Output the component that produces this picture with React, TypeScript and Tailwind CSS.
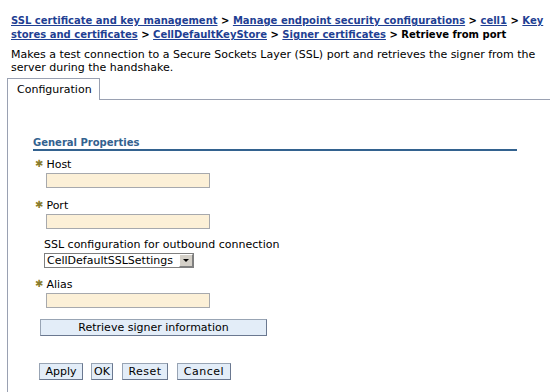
import React from 'react';

const linkCls = "text-[#1f3f93] underline";
const btnCls = "h-[17px] bg-[#e3edf8] border border-[#98a4b4] border-r-[#6a7890] border-b-[#6a7890] leading-[15px] text-[11px]";

function Req() {
    return <span className="text-[#8a7d2c] text-[10px] mr-[3px] relative top-[-1px]">✱</span>;
}

function Field({ label, required }: { label: string; required?: boolean }) {
    return (
        <div className="flex flex-col">
            <div className="h-[14px] leading-[14px] flex items-center">
                {required && <Req />}
                <span>{label}</span>
            </div>
            <div className="ml-[11px] mt-[1px] w-[164px] h-[15px] bg-[#fcf0d7] border border-[#a7a9ad]" />
        </div>
    );
}

export default function App() {
    return (
        <div className="w-[553px] h-[392px] bg-white overflow-hidden text-black text-[11px] font-['DejaVu_Sans',Verdana,sans-serif]">
            <div className="px-[11px] pt-[14px]">
                <p className="font-bold text-[10px] leading-[14px] whitespace-nowrap">
                    <a className={linkCls}>SSL certificate and key management</a> &gt; <a className={linkCls}>Manage endpoint security configurations</a> &gt; <a className={linkCls}>cell1</a> &gt; <a className={linkCls}>Key</a>
                    <br />
                    <a className={linkCls}>stores and certificates</a> &gt; <a className={linkCls}>CellDefaultKeyStore</a> &gt; <a className={linkCls}>Signer certificates</a> &gt; Retrieve from port
                </p>
                <p className="mt-[6px] leading-[13px] whitespace-nowrap">
                    Makes a test connection to a Secure Sockets Layer (SSL) port and retrieves the signer from the
                    <br />
                    server during the handshake.
                </p>
            </div>

            <div className="ml-[7px] mt-[4px] mr-[3px]">
                <div className="flex">
                    <div className="w-[93px] h-[22px] border-l border-t border-r border-[#9aa1b2] pl-[9px] leading-[21px]">
                        Configuration
                    </div>
                    <div className="flex-1 border-b border-[#9aa1b2]" />
                </div>
                <div className="border-l border-[#9aa1b2] h-[300px] pl-[25px] pt-[37px]">
                    <div className="w-[484px] border-b-2 border-[#33628f]">
                        <div className="font-bold text-[10px] text-[#33628f] leading-[12px]">General Properties</div>
                    </div>
                    <div className="pl-[2px] mt-[7px] flex flex-col gap-[11px]">
                        <Field label="Host" required />
                        <Field label="Port" required />
                        <div className="flex flex-col pl-[9px] mt-[-2px]">
                            <div className="leading-[14px]">SSL configuration for outbound connection</div>
                            <div className="mt-[1px] w-[150px] h-[15px] border border-[#7f7f7f] bg-white flex items-center">
                                <span className="flex-1 pl-[2px] leading-[13px]">CellDefaultSSLSettings</span>
                                <div className="w-[14px] h-[13px] bg-[#d4d0c8] border border-white border-r-[#808080] border-b-[#808080] flex items-center justify-center">
                                    <div className="w-0 h-0 border-l-[3px] border-r-[3px] border-t-[3px] border-l-transparent border-r-transparent border-t-black" />
                                </div>
                            </div>
                        </div>
                        <div className="mt-[-1px]">
                            <Field label="Alias" required />
                        </div>
                    </div>
                    <button className={`${btnCls} mt-[11px] ml-[7px] w-[227px] block`}>
                        Retrieve signer information
                    </button>
                    <div className="mt-[27px] ml-[6px] flex items-center">
                        <button className={`${btnCls} w-[44px]`}>Apply</button>
                        <button className={`${btnCls} ml-[8px] w-[22px]`}>OK</button>
                        <button className={`${btnCls} ml-[9px] w-[46px] tracking-[0.5px]`}>Reset</button>
                        <button className={`${btnCls} ml-[9px] w-[54px] tracking-[0.5px]`}>Cancel</button>
                    </div>
                </div>
            </div>
        </div>
    );
}
